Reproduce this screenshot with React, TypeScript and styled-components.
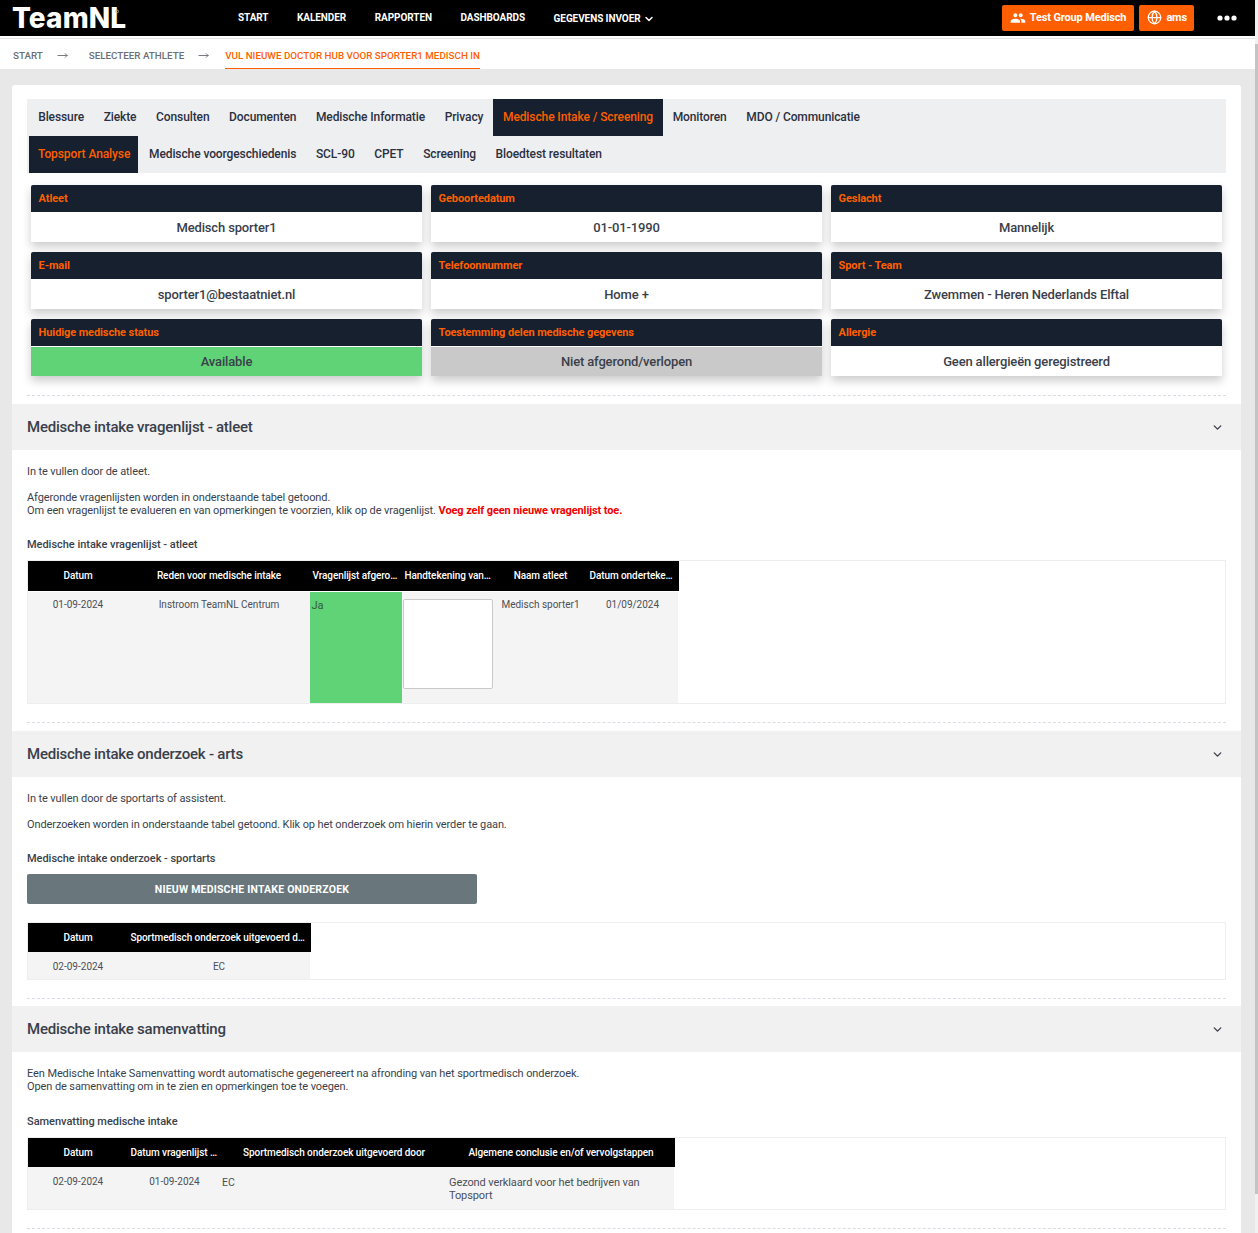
import React from "react";
import styled, { createGlobalStyle } from "styled-components";
import { ChevronDown, Globe, MoveRight } from "lucide-react";
import { MdPeople } from "react-icons/md";

const GlobalStyle = createGlobalStyle`
    html, body {
        margin: 0;
        height: 100%;
        overflow: hidden;
        background: #e8e8e8;
        font-family: Roboto, "Liberation Sans", sans-serif;
        color: #3a3f4b;
    }
    * { box-sizing: border-box; }
`;

const Page = styled.div`
    margin-right: 3px;
`;

/* fake scrollbar, the screenshot shows a sliver of it on the right */
const ScrollTrack = styled.div`
    position: fixed;
    top: 0;
    right: 0;
    bottom: 0;
    width: 3px;
    background: #f1f1f1;
`;

const ScrollThumb = styled.div`
    height: 1150px;
    margin-top: 44px;
    background: #c4c4c4;
`;

const TopBar = styled.header`
    display: flex;
    align-items: center;
    height: 36px;
    background: #000;
    padding: 0 18px 0 12px;
`;

const Logo = styled.div`
    position: relative;
    width: 226px;
    color: #fff;
    font-family: Inter, Roboto, sans-serif;
    font-size: 28px;
    font-weight: 800;
    letter-spacing: 0.1px;
    line-height: 36px;
`;

const LogoMark = styled.svg`
    position: absolute;
    left: 103px;
    top: 9px;
    width: 4px;
    height: 5px;
    fill: none;
    stroke: #bbb;
`;

const MainNav = styled.nav`
    display: flex;
    align-items: center;
    gap: 28.6px;
    flex: 1;
`;

const NavLink = styled.a<{ $drop?: boolean }>`
    display: flex;
    align-items: center;
    gap: 2px;
    margin-top: ${(p) => (p.$drop ? "1px" : "-1px")};
    color: #fff;
    font-size: 10px;
    font-weight: 700;
    letter-spacing: -0.08px;
    white-space: nowrap;
`;

const OrangeButton = styled.button<{ $endPad?: number }>`
    display: flex;
    align-items: center;
    gap: 4px;
    height: 26px;
    margin-left: 5px;
    padding: 0 ${(p) => p.$endPad ?? 8}px 1px 8px;
    border: 0;
    border-radius: 2px;
    background: #ff5f00;
    color: #fff;
    font-family: inherit;
    font-size: 11px;
    font-weight: 700;
    letter-spacing: -0.15px;
`;

const MoreDots = styled.svg`
    margin-left: 23px;
    width: 20px;
    height: 6px;
    fill: #fff;
`;

const HeaderRule = styled.div`
    height: 3px;
    background: #fff;
    border-bottom: 1px solid #e4e4e4;
`;

const Breadcrumbs = styled.div`
    display: flex;
    align-items: stretch;
    height: 30px;
    padding-left: 13px;
    background: #fff;
`;

const Crumb = styled.span<{ $active?: boolean }>`
    display: flex;
    align-items: center;
    padding-top: 3px;
    color: ${(p) => (p.$active ? "#ff5f00" : "#6b6f76")};
    font-size: 9.8px;
    font-weight: 500;
    white-space: nowrap;
    border-bottom: 1px solid ${(p) => (p.$active ? "#ff5f00" : "transparent")};
`;

const CrumbArrow = styled.span<{ $width: number }>`
    display: flex;
    align-items: center;
    width: ${(p) => p.$width}px;
    padding: 3px 0 0 14px;
    color: #6b6f76;
`;

const Card = styled.main`
    margin: 16px 14px 0 12px;
    padding: 14px 15px 40px;
    background: #fff;
    border-radius: 3px;
`;

const TabBar = styled.div`
    background: #eeeff1;
    padding-left: 1.4px;
`;

const TabRow = styled.div<{ $inset?: number }>`
    display: flex;
    height: 37px;
    padding-left: ${(p) => p.$inset ?? 0}px;
`;

const Tab = styled.a<{ $active?: boolean }>`
    display: flex;
    align-items: center;
    padding: 0 9.8px 2px;
    background: ${(p) => (p.$active ? "#16202e" : "transparent")};
    color: ${(p) => (p.$active ? "#ff5f00" : "#2b3040")};
    font-size: 12px;
    font-weight: 500;
    letter-spacing: -0.1px;
    white-space: nowrap;
`;

const CompactTab = styled(Tab)`
    padding: 0 8px 2px 9px;
    margin-right: 1px;
`;

const InfoGrid = styled.div`
    display: grid;
    grid-template-columns: repeat(3, 1fr);
    gap: 10px 9px;
    margin: 12px 4px 0;
`;

const InfoCell = styled.div`
    box-shadow: 0 5px 9px rgba(0, 0, 0, 0.2);
`;

const InfoLabel = styled.div`
    height: 27px;
    margin-bottom: 1px;
    padding-left: 7.6px;
    background: #16202e;
    border-radius: 2px 2px 0 0;
    color: #ff5f00;
    font-size: 11px;
    font-weight: 700;
    letter-spacing: -0.1px;
    line-height: 27px;
`;

const toneColors = { plain: "#fff", green: "#5fd375", grey: "#c9c9c9" };

const InfoValue = styled.div<{ $tone: keyof typeof toneColors }>`
    height: 29px;
    background: ${(p) => toneColors[p.$tone]};
    color: #3a3f4b;
    font-size: 13px;
    font-weight: 500;
    letter-spacing: -0.15px;
    line-height: 29px;
    text-align: center;
`;

const Dashed = styled.hr<{ $top?: number }>`
    margin: ${(p) => p.$top ?? 0}px 0 0;
    border: 0;
    border-top: 1px dashed #dcdce4;
`;

const AccordionHeader = styled.div<{ $top: number }>`
    display: flex;
    align-items: center;
    justify-content: space-between;
    height: 46px;
    margin: ${(p) => p.$top}px -15px 0;
    padding: 0 17px 0 15px;
    background: #f1f1f1;
    color: #3a3f4b;
    font-size: 15px;
    font-weight: 500;
    letter-spacing: -0.23px;
`;

const Intro = styled.p<{ $first?: boolean }>`
    margin: 0;
    padding-top: ${(p) => (p.$first ? 15 : 13)}px;
    font-size: 11px;
    letter-spacing: -0.1px;
    line-height: 13px;
`;

const Warning = styled.b`
    color: #f00000;
    font-weight: 700;
`;

const TableTitle = styled.h4<{ $top?: number }>`
    margin: ${(p) => p.$top ?? 21}px 0 9px;
    font-size: 11px;
    font-weight: 500;
    letter-spacing: -0.03px;
    line-height: 13px;
`;

const NewButton = styled.button`
    display: block;
    width: 450px;
    height: 30px;
    margin: 0 0 18px;
    padding: 1px 0 0;
    border: 0;
    border-radius: 2px;
    background: #69777d;
    color: #fff;
    font-family: inherit;
    font-size: 10.5px;
    font-weight: 700;
    letter-spacing: 0.2px;
`;

const TableFrame = styled.div`
    margin-bottom: 18px;
    border: 1px solid #eeeeee;
`;

const TableGrid = styled.div<{ $cols: string; $head: number; $gap?: number }>`
    display: grid;
    grid-template-columns: ${(p) => p.$cols};
    grid-template-rows: ${(p) => p.$head}px auto;
    row-gap: ${(p) => p.$gap ?? 0}px;
    width: max-content;

    /* the body row stops a pixel short of the black head */
    & > :last-child {
        margin-right: 1px;
    }
`;

const HeadCell = styled.div`
    overflow: hidden;
    padding: 0 2.5px;
    background: #000;
    color: #fff;
    font-size: 10px;
    font-weight: 500;
    letter-spacing: -0.08px;
    line-height: 29px;
    text-align: center;
    white-space: nowrap;
    text-overflow: ellipsis;
`;

const BodyCell = styled.div<{ $left?: boolean; $tight?: boolean }>`
    padding: ${(p) => (p.$tight ? "6px" : "8px")} ${(p) => (p.$left ? "1px" : "5px")} 0;
    background: #f4f4f4;
    color: #4b4f57;
    font-size: 10px;
    line-height: 13px;
    text-align: ${(p) => (p.$left ? "left" : "center")};
`;

const ShortCell = styled(BodyCell)`
    height: 27px;
`;

const TallCell = styled(BodyCell)`
    padding-top: 9px;
    font-size: 10.5px;
`;

const ConclusionCell = styled(BodyCell)`
    padding: 9px 22px 7px 2px;
    font-size: 11px;
    letter-spacing: -0.1px;
`;

const StatusCell = styled.div`
    height: 111px;
    padding: 7px 1.5px 0;
    background: #5fd375;
    color: #35593f;
    font-size: 11px;
    line-height: 13px;
`;

const SignatureCell = styled.div`
    padding: 7px 1px 0;
    background: #f4f4f4;
`;

const SignatureBox = styled.div`
    width: 90px;
    height: 90px;
    background: #fff;
    border: 1px solid #c9c9c9;
    border-radius: 2px;
`;

const Section = ({ title, top = 8 }: { title: string; top?: number }) => (
    <AccordionHeader $top={top}>
        {title}
        <ChevronDown size={13} strokeWidth={2.5} />
    </AccordionHeader>
);

const info: { label: string; value: string; tone?: keyof typeof toneColors }[] = [
    { label: "Atleet", value: "Medisch sporter1" },
    { label: "Geboortedatum", value: "01-01-1990" },
    { label: "Geslacht", value: "Mannelijk" },
    { label: "E-mail", value: "sporter1@bestaatniet.nl" },
    { label: "Telefoonnummer", value: "Home +" },
    { label: "Sport - Team", value: "Zwemmen - Heren Nederlands Elftal" },
    { label: "Huidige medische status", value: "Available", tone: "green" },
    { label: "Toestemming delen medische gegevens", value: "Niet afgerond/verlopen", tone: "grey" },
    { label: "Allergie", value: "Geen allergieën geregistreerd" },
];

const firstTabs = ["Blessure", "Ziekte", "Consulten", "Documenten", "Medische Informatie", "Privacy", "Medische Intake / Screening", "Monitoren", "MDO / Communicatie"];
const secondTabs = ["Medische voorgeschiedenis", "SCL-90", "CPET", "Screening", "Bloedtest resultaten"];

const App = () => (
    <>
        <GlobalStyle />
        <ScrollTrack><ScrollThumb /></ScrollTrack>
        <Page>
            <TopBar>
                <Logo>
                    TeamNL
                    <LogoMark viewBox="0 0 5 6"><circle cx="2.5" cy="3" r="1.8" /></LogoMark>
                </Logo>
                <MainNav>
                    <NavLink>START</NavLink>
                    <NavLink>KALENDER</NavLink>
                    <NavLink>RAPPORTEN</NavLink>
                    <NavLink>DASHBOARDS</NavLink>
                    <NavLink $drop>
                        GEGEVENS INVOER <ChevronDown size={12} strokeWidth={3} />
                    </NavLink>
                </MainNav>
                <OrangeButton>
                    <MdPeople size={16} /> Test Group Medisch
                </OrangeButton>
                <OrangeButton $endPad={7}>
                    <Globe size={15} /> ams
                </OrangeButton>
                <MoreDots viewBox="0 0 20 6">
                    <circle cx="3" cy="3" r="2.6" />
                    <circle cx="10" cy="3" r="2.6" />
                    <circle cx="17" cy="3" r="2.6" />
                </MoreDots>
            </TopBar>
            <HeaderRule />

            <Breadcrumbs>
                <Crumb>START</Crumb>
                <CrumbArrow $width={46}><MoveRight size={11} /></CrumbArrow>
                <Crumb>SELECTEER ATHLETE</Crumb>
                <CrumbArrow $width={41}><MoveRight size={11} /></CrumbArrow>
                <Crumb $active>VUL NIEUWE DOCTOR HUB VOOR SPORTER1 MEDISCH IN</Crumb>
            </Breadcrumbs>

            <Card>
                <TabBar>
                    <TabRow>
                        {firstTabs.map((t) => (
                            <Tab key={t} $active={t === "Medische Intake / Screening"}>{t}</Tab>
                        ))}
                    </TabRow>
                    <TabRow $inset={0.6}>
                        <CompactTab $active>Topsport Analyse</CompactTab>
                        {secondTabs.map((t) => (
                            <Tab key={t}>{t}</Tab>
                        ))}
                    </TabRow>
                </TabBar>

                <InfoGrid>
                    {info.map((item) => (
                        <InfoCell key={item.label}>
                            <InfoLabel>{item.label}</InfoLabel>
                            <InfoValue $tone={item.tone ?? "plain"}>{item.value}</InfoValue>
                        </InfoCell>
                    ))}
                </InfoGrid>

                <Dashed $top={19} />
                <Section title="Medische intake vragenlijst - atleet" />
                <Intro $first>In te vullen door de atleet.</Intro>
                <Intro>
                    Afgeronde vragenlijsten worden in onderstaande tabel getoond.
                    <br />
                    Om een vragenlijst te evalueren en van opmerkingen te voorzien, klik op de vragenlijst.{" "}
                    <Warning>Voeg zelf geen nieuwe vragenlijst toe.</Warning>
                </Intro>
                <TableTitle>Medische intake vragenlijst - atleet</TableTitle>
                <TableFrame>
                    <TableGrid $cols="100px 182px 92px 92px 93px 92px" $head={30} $gap={1}>
                        <HeadCell>Datum</HeadCell>
                        <HeadCell>Reden voor medische intake</HeadCell>
                        <HeadCell>Vragenlijst afgerond</HeadCell>
                        <HeadCell>Handtekening van de atleet</HeadCell>
                        <HeadCell>Naam atleet</HeadCell>
                        <HeadCell>Datum ondertekening</HeadCell>
                        <BodyCell $tight>01-09-2024</BodyCell>
                        <BodyCell $tight>Instroom TeamNL Centrum</BodyCell>
                        <StatusCell>Ja</StatusCell>
                        <SignatureCell><SignatureBox /></SignatureCell>
                        <BodyCell $tight>Medisch sporter1</BodyCell>
                        <BodyCell $tight>01/09/2024</BodyCell>
                    </TableGrid>
                </TableFrame>

                <Dashed />
                <Section title="Medische intake onderzoek - arts" />
                <Intro $first>In te vullen door de sportarts of assistent.</Intro>
                <Intro>Onderzoeken worden in onderstaande tabel getoond. Klik op het onderzoek om hierin verder te gaan.</Intro>
                <TableTitle>Medische intake onderzoek - sportarts</TableTitle>
                <NewButton>NIEUW MEDISCHE INTAKE ONDERZOEK</NewButton>
                <TableFrame>
                    <TableGrid $cols="100px 183px" $head={29}>
                        <HeadCell>Datum</HeadCell>
                        <HeadCell>Sportmedisch onderzoek uitgevoerd door</HeadCell>
                        <ShortCell>02-09-2024</ShortCell>
                        <ShortCell>EC</ShortCell>
                    </TableGrid>
                </TableFrame>

                <Dashed />
                <Section title="Medische intake samenvatting" top={7} />
                <Intro $first>
                    Een Medische Intake Samenvatting wordt automatische gegenereert na afronding van het sportmedisch onderzoek.
                    <br />
                    Open de samenvatting om in te zien en opmerkingen toe te voegen.
                </Intro>
                <TableTitle $top={22}>Samenvatting medische intake</TableTitle>
                <TableFrame>
                    <TableGrid $cols="100px 93px 226px 228px" $head={29}>
                        <HeadCell>Datum</HeadCell>
                        <HeadCell>Datum vragenlijst afgerond</HeadCell>
                        <HeadCell>Sportmedisch onderzoek uitgevoerd door</HeadCell>
                        <HeadCell>Algemene conclusie en/of vervolgstappen</HeadCell>
                        <BodyCell>02-09-2024</BodyCell>
                        <BodyCell>01-09-2024</BodyCell>
                        <TallCell $left>EC</TallCell>
                        <ConclusionCell $left>Gezond verklaard voor het bedrijven van Topsport</ConclusionCell>
                    </TableGrid>
                </TableFrame>
                <Dashed />
            </Card>
        </Page>
    </>
);

export default App;
